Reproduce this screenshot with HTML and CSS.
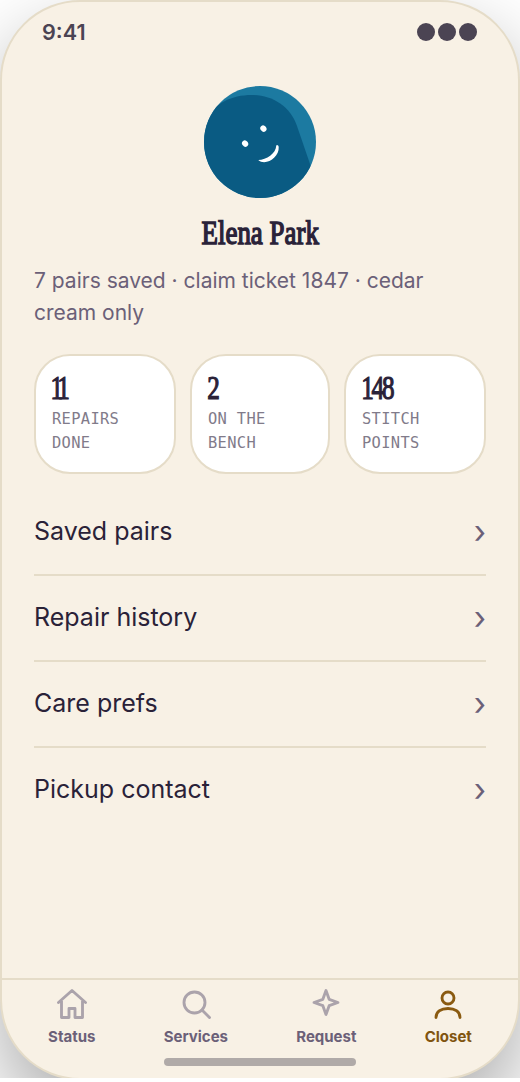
FILE: index.html
```html
<!DOCTYPE html>
<html lang="en">
<head>
<meta charset="utf-8">
<title>Closet</title>
<link rel="stylesheet" href="styles.css">
</head>
<body>
<div class="viewport">
<div class="phone">
  <header class="statusbar">
    <span class="time">9:41</span>
    <span class="dots"><i></i><i></i><i></i></span>
  </header>
  <main class="content">
    <svg class="avatar" viewBox="0 0 112 112">
      <defs><clipPath id="disc"><circle cx="56" cy="56" r="56"/></clipPath></defs>
      <g clip-path="url(#disc)">
        <rect width="112" height="112" fill="#1c7aa1"/>
        <path d="M-10 42C8 22 21 9 48 9C68 9 86 20 93 40L106 78L118 114H-10Z" fill="#0a5b83"/>
        <ellipse cx="41.1" cy="57.6" rx="2.9" ry="3.4" transform="rotate(-37 41.1 57.6)" fill="#fff"/>
        <ellipse cx="59.4" cy="42.6" rx="2.9" ry="3.4" transform="rotate(-37 59.4 42.6)" fill="#fff"/>
        <path d="M54.2 74C62.5 74 72 67 72.2 60C72.3 58.4 74.4 58.8 74.7 61C75.5 71.5 61.5 80.5 54.2 74Z" fill="#fff"/>
      </g>
    </svg>
    <h1 class="name"><span>Elena Park</span></h1>
    <p class="summary">7 pairs saved · claim ticket 1847 · cedar cream only</p>
    <section class="stats">
      <div class="stat"><b class="ones">11</b><span>REPAIRS DONE</span></div>
      <div class="stat"><b>2</b><span>ON THE BENCH</span></div>
      <div class="stat"><b class="points">148</b><span>STITCH POINTS</span></div>
    </section>
    <nav class="list">
      <a class="row"><span>Saved pairs</span><span class="chev">›</span></a>
      <a class="row"><span>Repair history</span><span class="chev">›</span></a>
      <a class="row"><span>Care prefs</span><span class="chev">›</span></a>
      <a class="row"><span>Pickup contact</span><span class="chev">›</span></a>
    </nav>
  </main>
  <footer class="tabs">
    <a class="tab"><svg viewBox="0 0 24 24"><path d="M3 11l9-8 9 8M5 10v11h5v-6h4v6h5V10"/></svg>Status</a>
    <a class="tab"><svg viewBox="0 0 24 24"><circle cx="11" cy="11" r="7"/><path d="M16 16l5 5"/></svg>Services</a>
    <a class="tab"><svg viewBox="0 0 24 24"><path d="M12 3l2.1 5.9L20 11l-5.9 2.1L12 19l-2.1-5.9L4 11l5.9-2.1z"/></svg>Request</a>
    <a class="tab active"><svg viewBox="0 0 24 24"><circle cx="12" cy="8" r="4"/><path d="M4 21c0-4 3.5-6 8-6s8 2 8 6"/></svg>Closet</a>
  </footer>
  <div class="homebar"></div>
</div>
</div>
</body>
</html>
```
FILE: styles.css
```css
* { box-sizing: border-box; }
body { margin: 0; background: #fff; font-family: Inter, "Liberation Sans", sans-serif; color: #2a2238; }
.viewport { width: 520px; height: 1078px; overflow: hidden; }
.phone {
  position: relative;
  width: 520px; height: 1080px;
  display: flex; flex-direction: column;
  background: #f8f1e5;
  border: 2px solid #e5dcc8;
  border-radius: 80px;
  box-shadow: 0 36px 80px rgba(0, 0, 0, .33);
}
.statusbar { display: flex; justify-content: space-between; align-items: center; height: 60px; padding: 0 41px 0 40px; color: #4b4453; }
.time { font-size: 21.6px; font-weight: 600; }
.dots { display: flex; gap: 3px; }
.dots i { width: 18px; height: 18px; border-radius: 50%; background: #4b4453; }
.content { flex: 1; display: flex; flex-direction: column; padding: 24px 32px 0; }
.avatar { width: 112px; height: 112px; align-self: center; }
.name { margin: 13px 0 0; height: 42px; line-height: 42px; text-align: center; font-family: "Liberation Serif", serif; font-size: 34.5px; font-weight: 400; -webkit-text-stroke: 1.5px currentColor; white-space: nowrap; }
.name span { display: inline-block; transform: scaleX(.78); }
.summary { margin: 12px 0 0; font-size: 21px; line-height: 32px; color: #6b6078; }
.stats { display: grid; grid-template-columns: 142px 140px 142px; gap: 14px; margin-top: 25px; }
.stat { height: 120px; padding: 14px 16px; background: #fff; border: 2px solid #e5dcc8; border-radius: 36px; }
.stat b { display: block; height: 37px; line-height: 36px; font-family: "Liberation Serif", serif; font-size: 34px; font-weight: 400; -webkit-text-stroke: 1.2px currentColor; transform: scaleX(.74); transform-origin: left; text-indent: -1px; }
.stat .ones { letter-spacing: -6.5px; text-indent: -2px; }
.stat .points { letter-spacing: -3px; text-indent: -1px; }
.stat span { display: block; font-family: "DejaVu Sans Mono", monospace; font-size: 15.4px; letter-spacing: .33px; line-height: 24px; color: #817b8a; }
.list { margin-top: 16px; }
.row { display: flex; justify-content: space-between; align-items: center; height: 86px; padding-bottom: 2px; font-size: 25px; border-bottom: 2px solid #e5dcc8; }
.row:last-child { border-color: transparent; }
.chev { font-size: 32px; padding-top: 1px; color: #6b6078; }
.tabs { display: flex; justify-content: space-around; height: 100px; padding: 6px 12px 0; border-top: 2px solid #e5dcc8; }
.tab { display: flex; flex-direction: column; align-items: center; font-size: 15px; line-height: 20px; font-weight: 700; color: #6b6078; }
.tab svg { width: 36px; height: 36px; margin-bottom: 5px; fill: none; stroke: #aba3ab; stroke-width: 1.9; stroke-linecap: round; stroke-linejoin: round; }
.active { color: #80540f; }
.active svg { stroke: #8a5a10; }
.homebar { position: absolute; left: 162px; top: 1056px; width: 192px; height: 8px; border-radius: 4px; background: #b0aaa8; }
```
